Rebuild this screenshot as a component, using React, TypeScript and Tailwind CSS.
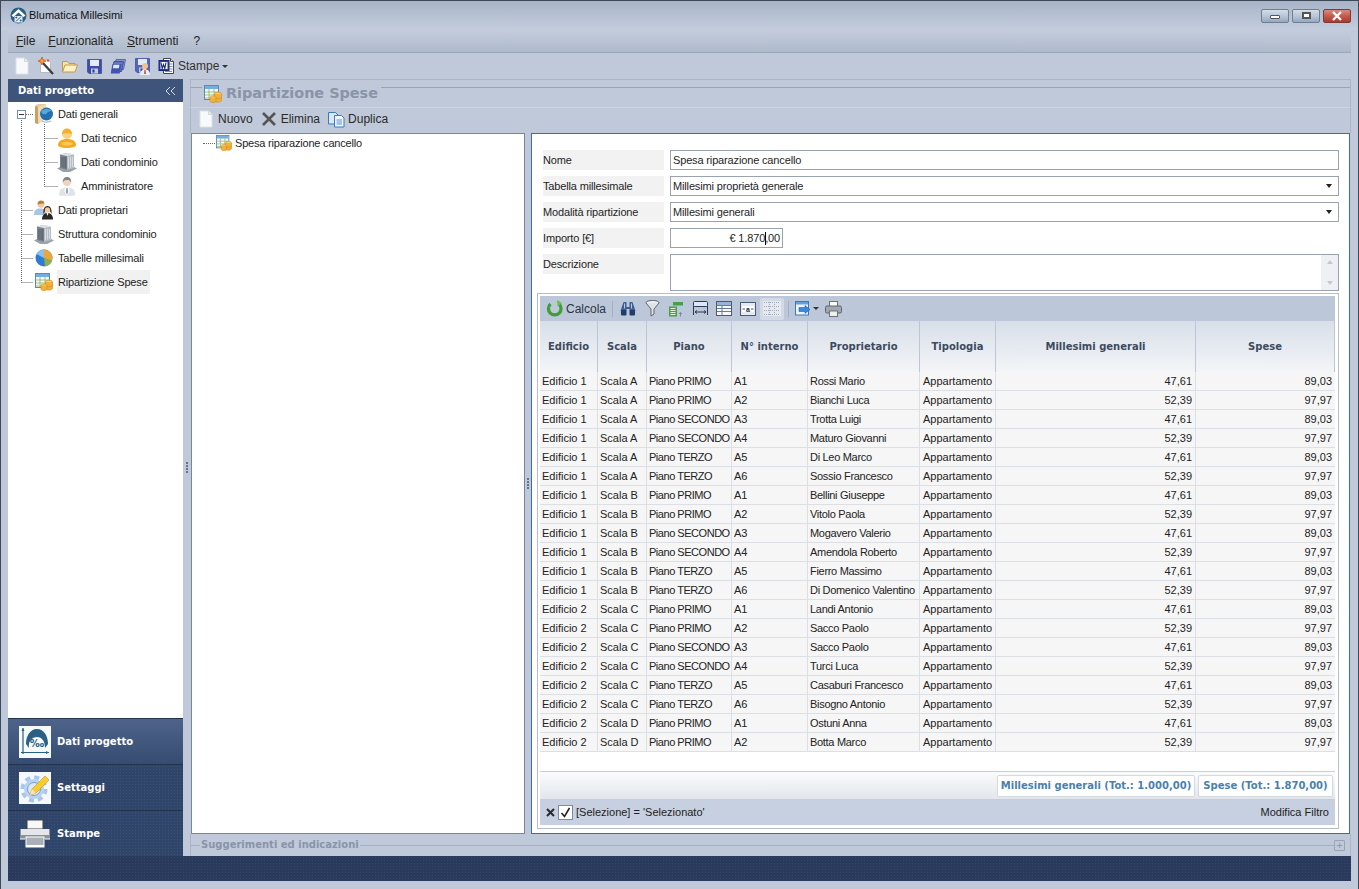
import React from "react"

const FONT = "font-['Liberation_Sans',Arial,sans-serif]"

const rows = [
  ["Edificio 1", "Scala A", "Piano PRIMO", "A1", "Rossi Mario"],
  ["Edificio 1", "Scala A", "Piano PRIMO", "A2", "Bianchi Luca"],
  ["Edificio 1", "Scala A", "Piano SECONDO", "A3", "Trotta Luigi"],
  ["Edificio 1", "Scala A", "Piano SECONDO", "A4", "Maturo Giovanni"],
  ["Edificio 1", "Scala A", "Piano TERZO", "A5", "Di Leo Marco"],
  ["Edificio 1", "Scala A", "Piano TERZO", "A6", "Sossio Francesco"],
  ["Edificio 1", "Scala B", "Piano PRIMO", "A1", "Bellini Giuseppe"],
  ["Edificio 1", "Scala B", "Piano PRIMO", "A2", "Vitolo Paola"],
  ["Edificio 1", "Scala B", "Piano SECONDO", "A3", "Mogavero Valerio"],
  ["Edificio 1", "Scala B", "Piano SECONDO", "A4", "Amendola Roberto"],
  ["Edificio 1", "Scala B", "Piano TERZO", "A5", "Fierro Massimo"],
  ["Edificio 1", "Scala B", "Piano TERZO", "A6", "Di Domenico Valentino"],
  ["Edificio 2", "Scala C", "Piano PRIMO", "A1", "Landi Antonio"],
  ["Edificio 2", "Scala C", "Piano PRIMO", "A2", "Sacco Paolo"],
  ["Edificio 2", "Scala C", "Piano SECONDO", "A3", "Sacco Paolo"],
  ["Edificio 2", "Scala C", "Piano SECONDO", "A4", "Turci Luca"],
  ["Edificio 2", "Scala C", "Piano TERZO", "A5", "Casaburi Francesco"],
  ["Edificio 2", "Scala C", "Piano TERZO", "A6", "Bisogno Antonio"],
  ["Edificio 2", "Scala D", "Piano PRIMO", "A1", "Ostuni Anna"],
  ["Edificio 2", "Scala D", "Piano PRIMO", "A2", "Botta Marco"],
]

const GRID = "grid grid-cols-[58px_49px_85px_76px_112px_76px_200px_139px]"

const IconFile = () => (
  <svg width="14" height="18" viewBox="0 0 14 18">
    <path d="M1 1h8.500L13 4.500V17H1z" fill="#f7f9fb" stroke="#dde1e7" />
    <path d="M9.500 1v3.500H13" fill="#e8ecf1" stroke="#d2d7de" />
  </svg>
)
const IconWand = () => (
  <svg width="18" height="18" viewBox="0 0 18 18">
    <path d="M3.500 2.500h7l3 3v10h-10z" fill="#fff" stroke="#b4bac4" />
    <path d="M6 6l10 11" stroke="#3c3c3c" strokeWidth="2.200" />
    <path d="M5 0l1.200 2.800L9 4 6.200 5.200 5 8 3.800 5.200 1 4l2.800-1.200z" fill="#f2a818" stroke="#d8402f" strokeWidth=".7" />
    <circle cx="11" cy="3.500" r="1.200" fill="#e8503a" />
  </svg>
)
const IconFolder = () => (
  <svg width="16" height="13" viewBox="0 0 16 13">
    <path d="M.5 12V1.500h5l1.500 2h6V5" fill="#f7e3a6" stroke="#c09a4a" />
    <path d="M.5 12L3 5h12.500l-2.500 7z" fill="#fdf0c4" stroke="#c09a4a" />
  </svg>
)
const IconSave = ({ color = "#3d4da8" }: { color?: string }) => (
  <svg width="15" height="15" viewBox="0 0 15 15">
    <path d="M.5.500h14v14H2L.5 13z" fill={color} stroke="#2b3a8c" strokeWidth=".6" />
    <rect x="3" y="1" width="9" height="6" fill="#e4ebf8" />
    <rect x="4" y="9.500" width="7" height="5" fill="#c4cbe0" />
    <rect x="5.500" y="10.500" width="2" height="3" fill="#2b3a8c" />
  </svg>
)
const IconSaveAll = () => (
  <svg width="16" height="15" viewBox="0 0 16 15">
    <path d="M6 .5h9.500l-2 10H4z" fill="#8e9ad0" stroke="#5866ae" />
    <path d="M4 2.500h9.500l-2 10H2z" fill="#6877c0" stroke="#3f4fa0" />
    <path d="M2.500 5h9L9.700 14.500H.7z" fill="#4454ae" />
    <path d="M3.500 5.800h6l-.7 3.500h-6z" fill="#dfe6f6" />
  </svg>
)
const IconSaveAs = () => (
  <div className="relative h-[17px] w-[15px]">
    <IconSave color="#5565bb" />
    <svg className="absolute left-[4px] top-[4px]" width="12" height="13" viewBox="0 0 12 13">
      <circle cx="6" cy="4" r="3" fill="#f0c090" />
      <path d="M1 13c0-4 2-5.500 5-5.500s5 1.500 5 5.500z" fill="#e8eef8" />
      <path d="M5.300 8h1.400l.3 4h-2z" fill="#e05a30" />
    </svg>
  </div>
)
const IconWord = () => (
  <svg width="17" height="18" viewBox="0 0 17 18">
    <path d="M5.500 1.500h7l3 3v12h-10z" fill="#fff" stroke="#444" />
    <path d="M12.500 1.500v3h3" fill="#ddd" stroke="#444" />
    <path d="M11 7h3.500M11 9.500h3.500M11 12h3.500M7 14.500h7" stroke="#7a8aa8" />
    <rect x="1" y="3.500" width="10" height="10" fill="#2a3f9e" stroke="#1a2878" />
    <rect x="2.500" y="5" width="7" height="7" fill="#fff" />
    <path d="M3 5.500l1.200 6 1.300-4 1.300 4 1.200-6" fill="none" stroke="#1a2878" strokeWidth="1.100" />
  </svg>
)
const IconSpesa = ({ size = 18 }: { size?: number }) => (
  <svg width={size} height={size} viewBox="0 0 18 18">
    <rect x=".5" y=".5" width="14" height="14" fill="#f6f8fb" stroke="#5d88b8" />
    <rect x="1" y="1" width="13" height="3" fill="#76aedd" />
    <path d="M1 7h13M1 10h13M1 13h13M5 4v10M10 4v10" stroke="#8fb55f" strokeWidth=".8" />
    <ellipse cx="14" cy="9" rx="3.500" ry="1.800" fill="#fbd264" stroke="#d0921e" strokeWidth=".7" />
    <path d="M10.500 9v6.300c0 1 1.500 1.800 3.500 1.800s3.500-.8 3.500-1.800V9" fill="#f4b03a" stroke="#d0921e" strokeWidth=".7" />
    <path d="M10.500 12c0 1 1.500 1.800 3.500 1.800s3.500-.8 3.500-1.800" fill="none" stroke="#d0921e" strokeWidth=".7" />
    <ellipse cx="9" cy="12.500" rx="3" ry="1.500" fill="#fbd264" stroke="#d0921e" strokeWidth=".7" />
    <path d="M6 12.500v3.500c0 .9 1.300 1.500 3 1.500s3-.6 3-1.500v-3.500" fill="#f4b03a" stroke="#d0921e" strokeWidth=".7" />
  </svg>
)
const IconDuplica = () => (
  <svg width="17" height="17" viewBox="0 0 17 17">
    <path d="M.5 1.500h7l2.500 2.500v9H.5z" fill="#d8e8f8" stroke="#3f78b8" />
    <path d="M6.500 4.500h7l2.500 2.500v9H6.500z" fill="#eef6fd" stroke="#3f78b8" />
    <path d="M8.500 9h5.500M8.500 11h5.500M8.500 13h5.500" stroke="#5f94cc" />
  </svg>
)
const IconFolderGlobe = () => (
  <svg width="20" height="22" viewBox="0 0 20 22">
    <path d="M1 3l3-2h8v14l-8 6-3-1z" fill="#e6c898" />
    <path d="M4 21l-3-1V3l3 1z" fill="#c8a066" />
    <path d="M4 4l8-3v14l-8 6z" fill="#efd9b2" />
    <circle cx="12.500" cy="11" r="6.500" fill="#2270b0" />
    <path d="M7.500 8c3-2.500 6-2.500 9.500-1-1 2.500-3 1-4 3s-3.500 1.500-5.500 0z" fill="#58a8d8" />
    <path d="M8 17.500c3 1.500 6 1 9 0l.5 1c-3 1.500-7 1.500-10 0z" fill="#a8bccc" />
  </svg>
)
const IconHelmet = () => (
  <svg width="20" height="20" viewBox="0 0 20 20">
    <path d="M1 17c0-4 4-6 9-6s9 2 9 6c0 2-4 3-9 3s-9-1-9-3z" fill="#f5a818" />
    <path d="M4 16c2-3 10-3 12 0-3 2-9 2-12 0z" fill="#fbc85a" />
    <circle cx="10" cy="6" r="5" fill="#f8d27c" />
    <path d="M5 6c0-3 2-5.500 5-5.500s5 2.500 5 5.500c-3-1-7-1-10 0z" fill="#f2b02c" />
  </svg>
)
const IconBuilding = () => (
  <svg width="20" height="20" viewBox="0 0 20 20">
    <path d="M0 16.500l5-2.500h10l5 2.500-7 3.500H6z" fill="#9aa2aa" />
    <path d="M3 2.500L10 1v17l-7-2z" fill="#7b858e" />
    <path d="M10 1l7 1.500V16l-7 2z" fill="#b4bcc4" />
    <path d="M3 2.500L10 1l7 1.500-7 1.500z" fill="#dfe3e7" />
    <path d="M5 5v10.500M7 5v11M8.800 5v11.500" stroke="#48525a" strokeWidth=".7" />
    <path d="M11.500 5v11M13.500 5v10.500M15.500 5v10" stroke="#e6eaee" strokeWidth=".7" />
  </svg>
)
const IconAdmin = () => (
  <svg width="18" height="20" viewBox="0 0 18 20">
    <path d="M1 19.500c0-6 2.500-8 8-8s8 2 8 8c-3 .5-13 .5-16 0z" fill="#dfe3e8" />
    <path d="M7 11.500h4l.5 4-2.500 4-2.500-4z" fill="#fff" />
    <path d="M8.300 12h1.400l.5 4-1.200 2.500L7.800 16z" fill="#9aa2ac" />
    <circle cx="9" cy="6" r="4" fill="#f2d2b8" />
    <path d="M4.800 6.500C4.500 3 6.500 1 9 1s4.500 2 4.200 5.500C12 4.500 11 4 9 4s-3 .5-4.200 2.500z" fill="#80868e" />
  </svg>
)
const IconOwners = () => (
  <svg width="20" height="20" viewBox="0 0 20 20">
    <circle cx="7" cy="4.500" r="3.300" fill="#f2c698" />
    <path d="M3.500 4.500C3.500 1.500 5 .5 7 .5s3.500 1 3.500 3c-2 0-5 0-7 1z" fill="#b08038" />
    <path d="M0 15c0-5 2-6.500 6.500-6.500S12 11 12 15z" fill="#a8c4e8" />
    <path d="M9.500 14c-.5-5 1-8 4-8s4.500 3 4 8l-1.500-3h-5z" fill="#33261a" />
    <circle cx="13.500" cy="10" r="2.700" fill="#f2ca9e" />
    <path d="M8 19.500c0-4 2-6.500 5.500-6.500s5.500 2.500 5.500 6.500z" fill="#2c2824" />
    <path d="M12.500 13h2l-1 3z" fill="#fff" />
  </svg>
)
const IconPie = () => (
  <svg width="18" height="18" viewBox="0 0 18 18">
    <circle cx="9" cy="9" r="8.500" fill="#2f7bd4" />
    <path d="M9 9V.5a8.500 8.500 0 0 1 7.800 11.500z" fill="#eea632" />
    <path d="M9 9l7.800 3A8.500 8.500 0 0 1 10 17.400z" fill="#8cb04c" />
    <path d="M9 .5a8.500 8.500 0 0 0-7.500 4.500L9 9z" fill="#8cc0ec" />
  </svg>
)
const IconBinoculars = () => (
  <svg width="16" height="15" viewBox="0 0 16 15">
    <path d="M3.500 1h3v5h3V1h3l3 9H9.500V8h-3v2H.5z" fill="#3f5f92" />
    <rect x="1" y="9" width="5.500" height="5.500" rx="1" fill="#243c68" />
    <rect x="9.500" y="9" width="5.500" height="5.500" rx="1" fill="#243c68" />
    <path d="M4.500 2.500v5M11.500 2.500v5" stroke="#b4c8e8" />
  </svg>
)
const IconFilter = () => (
  <svg width="15" height="17" viewBox="0 0 15 17">
    <ellipse cx="7.500" cy="2.500" rx="6.500" ry="2" fill="#eef0f3" stroke="#5e666e" />
    <path d="M1 3l5 6v7l3-2V9l5-6" fill="#dfe3e8" stroke="#5e666e" />
  </svg>
)
const IconColumns = () => (
  <svg width="16" height="16" viewBox="0 0 16 16">
    <rect x="5" y="1" width="10" height="3.500" fill="#46a046" />
    <path d="M10.500 5h2v2h-2zM13 5h2v2h-2zM10.500 7.500h2v2h-2zM13 7.500h2v2h-2z" fill="#a8d0e0" />
    <rect x="1" y="5.500" width="8" height="10" fill="#4aa04a" />
    <path d="M2.500 7.500h5M2.500 9.500h5M2.500 11.500h5M2.500 13.500h5" stroke="#e4f4d8" />
    <path d="M12.500 15.500v-4m-1.500 1.500l1.500-1.500 1.500 1.500" stroke="#7a8a9a" fill="none" />
  </svg>
)
const IconWidth = () => (
  <svg width="17" height="15" viewBox="0 0 17 15">
    <rect x="1.500" y=".5" width="14" height="5" rx="1" fill="#dce8f6" stroke="#2a3a56" />
    <path d="M1.500 5v9M15.500 5v9" stroke="#2a3a56" />
    <path d="M3 11h11M3 11l2-1.500M3 11l2 1.500M14 11l-2-1.500M14 11l-2 1.500" stroke="#2a3a56" fill="none" />
  </svg>
)
const IconGridHead = () => (
  <svg width="16" height="15" viewBox="0 0 16 15">
    <rect x=".5" y=".5" width="15" height="14" fill="#f6f8fb" stroke="#4a5a76" />
    <rect x="1" y="1" width="14" height="3.500" fill="#9ab4d8" />
    <path d="M1 4.500h14M1 7.500h14M1 10.500h14M6 4.500v10" stroke="#6a7a96" />
  </svg>
)
const IconGridText = () => (
  <svg width="16" height="14" viewBox="0 0 16 14">
    <rect x=".5" y=".5" width="15" height="13" fill="#e4ebf4" stroke="#4a5a76" />
    <rect x="2" y="4" width="12" height="6" fill="#fff" />
    <text x="8" y="9.500" textAnchor="middle" fontSize="7" fontWeight="700" fill="#1e2a3c">a</text>
    <path d="M2.500 7H5M11 7h2.500" stroke="#4a5a76" />
  </svg>
)
const IconGridLines = () => (
  <svg width="18" height="15" viewBox="0 0 18 15">
    <rect width="18" height="15" fill="#e6eaf0" />
    <path d="M1 1.500h16M1 5.500h16M1 9.500h16M1 13.500h16M6.500 1v13M11.500 1v13" stroke="#a2abb8" strokeDasharray="1 1" />
  </svg>
)
const IconExport = () => (
  <svg width="17" height="15" viewBox="0 0 17 15">
    <rect x=".5" y=".5" width="13" height="13.500" fill="#f0f5fb" stroke="#3a78c0" />
    <rect x="1" y="1" width="12" height="2.500" fill="#62a0e0" />
    <path d="M4 6.500h6V4.500l5 4-5 4v-2H4z" fill="#3a88dc" stroke="#2a5ea8" strokeWidth=".6" />
  </svg>
)
const IconPrint = () => (
  <svg width="17" height="16" viewBox="0 0 17 16">
    <rect x="4.500" y=".5" width="8" height="5" fill="#fff" stroke="#6c727a" />
    <rect x=".5" y="5" width="16" height="7" rx="1.500" fill="#a2a8b0" stroke="#5e646c" />
    <rect x="4.500" y="10" width="8" height="5.500" fill="#f0f0f0" stroke="#6c727a" />
  </svg>
)
const IconRefresh = () => (
  <svg width="17" height="17" viewBox="0 0 17 17">
    <path d="M4.500 4a6.300 6.300 0 1 0 8.500 0" fill="none" stroke="#3f9e34" strokeWidth="3.200" />
    <path d="M11 0l.5 6.500 4.500-3.500z" fill="#68c04c" />
  </svg>
)

const LogoSmall = () => (
  <svg width="17" height="17" viewBox="0 0 17 17">
    <circle cx="8.500" cy="8.500" r="8" fill="#2a6084" />
    <path d="M8.500 2L1.500 8.500l2 1.500 5-4.500 5 4.500 2-1.500z" fill="#fff" />
    <rect x="4.500" y="9" width="8" height="6.500" fill="#e8eef4" />
    <path d="M6 14.500l5-5" stroke="#2a6084" />
    <circle cx="6.300" cy="10.500" r="1" fill="#2a6084" />
    <circle cx="10.700" cy="13.500" r="1" fill="#2a6084" />
  </svg>
)

function TitleButton({ children, tone = "blue" }: { children: React.ReactNode; tone?: "blue" | "red" }) {
  return (
    <div
      className={`flex h-[14px] w-[28px] items-center justify-center rounded-[2px] border ${
        tone === "red"
          ? "border-[#7a3a38] bg-[linear-gradient(#d88a80,#c65a4e_50%,#a83a30)]"
          : "border-[#6f7e92] bg-[linear-gradient(#d5dde8,#b8c6d8_50%,#94a8c0)]"
      }`}
    >
      {children}
    </div>
  )
}

function TreeRow({ icon, label, indent = 0, selected = false }: { icon: React.ReactNode; label: string; indent?: number; selected?: boolean }) {
  return (
    <div className="flex h-[24px] items-center" style={{ paddingLeft: indent }}>
      <div className="flex w-[23px] shrink-0 items-center justify-center">{icon}</div>
      <span className={`ml-[2px] flex h-[24px] items-center pl-[1px] pr-[2px] tracking-[-0.15px] ${selected ? "bg-[#f1f1f1]" : ""}`}>{label}</span>
    </div>
  )
}

function NavButton({ icon, label, active = false }: { icon: React.ReactNode; label: string; active?: boolean }) {
  return (
    <div
      className={`flex h-[46px] items-center gap-[6px] border-t border-[#24334f] pl-[11px] font-['DejaVu_Sans',sans-serif] text-[10px] font-bold text-white ${
        active
          ? "bg-[linear-gradient(#4d6389,#364c71)]"
          : "bg-[#30456a] bg-[radial-gradient(#ffffff10_1px,transparent_1px)] bg-[length:3px_3px]"
      }`}
    >
      <div className="h-[32px] w-[32px] shrink-0">{icon}</div>
      {label}
    </div>
  )
}

function FormRow({ label, children, tall = false }: { label: string; children: React.ReactNode; tall?: boolean }) {
  return (
    <div className="flex gap-[6px] tracking-[-0.15px]">
      <div className="flex h-[20px] w-[121px] shrink-0 items-center bg-[#f2f2f2]">{label}</div>
      <div className={`${tall ? "h-[37px]" : "h-[20px]"} flex-1`}>{children}</div>
    </div>
  )
}

function Combo({ value }: { value: string }) {
  return (
    <div className="flex h-full items-center justify-between border border-[#9aa3ad] bg-white pl-[2px] pr-[6px]">
      {value}
      <span className="h-0 w-0 border-x-[3.5px] border-t-[4px] border-x-transparent border-t-[#222]" />
    </div>
  )
}

export default function App() {
  const mainBtn = "flex w-[24px] shrink-0 items-center justify-center"
  const toolBtn = "flex h-[22px] w-[24px] items-center justify-center"
  return (
    <div className={`flex h-[889px] w-[1359px] flex-col overflow-hidden border border-b-0 border-[#3d4859] bg-[#bfc9da] px-[7px] text-[11px] leading-none text-[#1e1e1e] ${FONT}`}>
      {/* Title bar */}
      <div className="-mx-[7px] flex h-[29px] items-center justify-between bg-[linear-gradient(#a9b4c8,#c3cddd)] pl-[9px] pr-[7px]">
        <div className="flex items-center gap-[2px]">
          <LogoSmall />
          <span className="text-[#111]">Blumatica Millesimi</span>
        </div>
        <div className="flex items-center gap-[3px]">
          <TitleButton>
            <span className="mt-[3px] h-[4px] w-[10px] rounded-[1px] border border-[#555] bg-white" />
          </TitleButton>
          <TitleButton>
            <span className="h-[7px] w-[9px] border-2 border-[#555] bg-white" />
          </TitleButton>
          <TitleButton tone="red">
            <svg width="12" height="10" viewBox="0 0 12 10">
              <path d="M2 1l8 8M10 1l-8 8" stroke="#fff" strokeWidth="2.400" />
            </svg>
          </TitleButton>
        </div>
      </div>

      {/* Menu */}
      <div className="flex h-[23px] items-center gap-[14px] border-b border-[#9ca8ba] bg-[linear-gradient(#c3cddd,#aeb9cb)] pl-[8px] text-[12px] text-[#222]">
        <span><u>F</u>ile</span>
        <span className="-ml-[1px]"><u>F</u>unzionalità</span>
        <span><u>S</u>trumenti</span>
        <span className="ml-[1px]">?</span>
      </div>

      {/* Toolbar */}
      <div className="flex h-[26px] items-center pl-[2px] text-[12px] text-[#333]">
        <div className={mainBtn}><IconFile /></div>
        <div className={mainBtn}><IconWand /></div>
        <div className={mainBtn}><IconFolder /></div>
        <div className={mainBtn}><IconSave /></div>
        <div className={mainBtn}><IconSaveAll /></div>
        <div className={mainBtn}><IconSaveAs /></div>
        <div className={mainBtn}><IconWord /></div>
        <span className="flex items-center gap-[3px]">
          Stampe
          <span className="h-0 w-0 border-x-[3px] border-t-[3px] border-x-transparent border-t-[#333]" />
        </span>
      </div>

      <div className="flex min-h-0 flex-1">
        {/* Left panel */}
        <div className="flex w-[175px] shrink-0 flex-col">
          <div className="flex h-[23px] items-center justify-between bg-[#3f547b] pl-[10px] pr-[7px] pt-[1px] font-['DejaVu_Sans',sans-serif] text-[10px] font-bold text-white">
            Dati progetto
            <svg width="11" height="10" viewBox="0 0 11 10" fill="none" stroke="#d5dcea">
              <path d="M5 1L1 5l4 4M10 1L6 5l4 4" />
            </svg>
          </div>
          <div className="relative flex-1 bg-white pl-[14px] text-[#222]">
            {/* connector lines of the tree */}
            <svg className="absolute left-0 top-0" width="60" height="200" fill="none" stroke="#666" strokeDasharray="1 1">
              <path d="M13.500 16v164.500M13.500 180.500h12M13.500 156.500h12M13.500 132.500h12M13.500 108.500h12M18 12.500h8" />
              <path d="M36.500 22v62.500M36.500 84.500h14M36.500 60.500h14M36.500 36.500h14" />
            </svg>
            <div className="absolute left-[9px] top-[8px] flex h-[9px] w-[9px] items-center justify-center border border-[#7d8da5] bg-white">
              <span className="h-[1px] w-[5px] bg-[#333]" />
            </div>
            <div className="relative pl-[10px]">
              <TreeRow icon={<IconFolderGlobe />} label="Dati generali" />
              <TreeRow icon={<IconHelmet />} label="Dati tecnico" indent={23} />
              <TreeRow icon={<IconBuilding />} label="Dati condominio" indent={23} />
              <TreeRow icon={<IconAdmin />} label="Amministratore" indent={23} />
              <TreeRow icon={<IconOwners />} label="Dati proprietari" />
              <TreeRow icon={<IconBuilding />} label="Struttura condominio" />
              <TreeRow icon={<IconPie />} label="Tabelle millesimali" />
              <TreeRow icon={<IconSpesa />} label="Ripartizione Spese" selected />
            </div>
          </div>
          <NavButton
            active
            label="Dati progetto"
            icon={
              <svg width="32" height="32" viewBox="0 0 32 32">
                <rect width="32" height="32" fill="#f7fafb" />
                <path d="M4 2v26M2 26.500h28" stroke="#2a6084" strokeWidth="1.200" />
                <path d="M4 2l-1.500 3h3zM30 26.500l-3-1.500v3z" fill="#2a6084" />
                <path d="M7 18C7 10 11 3 18 3s11 7 11 15l-3 4c0-7-3-11-8-11s-9 4-8 11z" fill="#2a6084" />
                <text x="18" y="21" textAnchor="middle" fontSize="10" fontWeight="700" fill="#2a6084">‰</text>
              </svg>
            }
          />
          <NavButton
            label="Settaggi"
            icon={
              <svg width="32" height="32" viewBox="0 0 32 32">
                <rect width="32" height="32" fill="#f4f8fc" />
                <circle cx="15" cy="17" r="11.500" fill="none" stroke="#a8c6ec" strokeWidth="4" strokeDasharray="5 4" />
                <circle cx="15" cy="17" r="10" fill="#b8d2f2" />
                <circle cx="15" cy="17" r="6.500" fill="#dbe8f8" stroke="#7f9fc8" />
                <path d="M11 23l2-6L26 4l4 4-13 13z" fill="#f8cc2c" stroke="#c9960f" strokeWidth=".6" />
                <path d="M11 23l2-6 4 4z" fill="#f5e3c0" />
              </svg>
            }
          />
          <NavButton
            label="Stampe"
            icon={
              <svg width="32" height="32" viewBox="0 0 32 32">
                <path d="M8 11V2h16v9z" fill="#f8f8f8" stroke="#444" />
                <path d="M1.500 11h29v10h-29z" fill="#e4e6ea" />
                <path d="M1.500 17h29v4h-29z" fill="#8c9198" />
                <path d="M1 21h5M26 21h5" stroke="#fff" />
                <rect x="7" y="19" width="18" height="10" fill="#aab0b8" stroke="#fff" />
                <rect x="7" y="27" width="18" height="2" fill="#fff" />
              </svg>
            }
          />
        </div>

        {/* Splitter */}
        <div className="flex w-[7px] shrink-0 flex-col items-center justify-center gap-[1px]">
          {[0, 1, 2, 3].map((i) => (
            <span key={i} className="h-[2px] w-[2px] bg-[#65748c]" />
          ))}
        </div>

        {/* Content */}
        <div className="flex min-w-0 flex-1 flex-col">
          <div className="flex h-[29px] items-start border border-[#aab5c6] border-b-[#ccd4e0]">
            <span className="mt-[7px] w-[11px] border-t border-[#98a4b6]" />
            <div className="flex h-full items-center pl-[2px] pr-[3px]">
              <IconSpesa />
              <span className="ml-[4px] font-['DejaVu_Sans',sans-serif] text-[14.4px] font-bold text-[#8a94a8]">Ripartizione Spese</span>
            </div>
            <span className="mt-[7px] flex-1 border-t border-[#98a4b6]" />
          </div>
          <div className="flex h-[25px] items-center border-x border-[#aab5c6] pb-[3px] pl-[8px] text-[12px] text-[#2a2a2a]">
            <IconFile />
            <span className="ml-[5px]">Nuovo</span>
            <svg className="ml-[8px]" width="16" height="16" viewBox="0 0 16 16">
              <path d="M2 2l12 12M14 2L2 14" stroke="#555" strokeWidth="2.600" />
            </svg>
            <span className="ml-[4px]">Elimina</span>
            <span className="ml-[8px] flex"><IconDuplica /></span>
            <span className="ml-[3px]">Duplica</span>
          </div>

          <div className="ml-[1px] mr-[1px] flex min-h-0 flex-1">
            {/* Spese tree */}
            <div className="w-[334px] shrink-0 border border-[#78859a] bg-white pl-[11px]">
              <div className="flex h-[18px] items-center">
                <span className="mr-[1px] w-[12px] border-t border-dotted border-[#666]" />
                <IconSpesa size={16} />
                <span className="ml-[3px] tracking-[-0.2px]">Spesa riparazione cancello</span>
              </div>
            </div>

            <div className="flex w-[6px] shrink-0 flex-col items-center justify-center gap-[1px]">
              {[0, 1, 2, 3].map((i) => (
                <span key={i} className="h-[2px] w-[2px] bg-[#65748c]" />
              ))}
            </div>

            {/* Form + grid */}
            <div className="flex min-w-0 flex-1 flex-col border border-[#3a6ea5] bg-white">
              <div className="flex flex-col gap-[6px] pl-[11px] pr-[10px] pt-[16px]">
                <FormRow label="Nome">
                  <div className="flex h-full items-center border border-[#9aa3ad] pl-[2px]">Spesa riparazione cancello</div>
                </FormRow>
                <FormRow label="Tabella millesimale">
                  <Combo value="Millesimi proprietà generale" />
                </FormRow>
                <FormRow label="Modalità ripartizione">
                  <Combo value="Millesimi generali" />
                </FormRow>
                <FormRow label="Importo [€]">
                  <div className="flex h-full w-[113px] items-center justify-end border border-[#9aa3ad] pr-[2px]">
                    € 1.870<span className="-mr-[1px] h-[13px] w-[1px] bg-black" />,00
                  </div>
                </FormRow>
                <FormRow label="Descrizione" tall>
                  <div className="flex h-full justify-end border border-[#9aa3ad]">
                    <div className="flex w-[17px] flex-col justify-between bg-[#eef0f3] py-[5px]">
                      <span className="mx-auto h-0 w-0 border-x-[3px] border-b-[4px] border-x-transparent border-b-[#c4c8ce]" />
                      <span className="mx-auto h-0 w-0 border-x-[3px] border-t-[4px] border-x-transparent border-t-[#c4c8ce]" />
                    </div>
                  </div>
                </FormRow>
              </div>

              {/* Grid */}
              <div className="mb-[4px] ml-[5px] mr-[10px] mt-[2px] flex min-h-0 flex-1 flex-col border border-[#b8bec6] pb-[3px] pl-[2px] pr-[3px] pt-[2px]">
                <div className="flex h-[25px] shrink-0 items-center bg-[#bcc8da] pl-[6px] text-[12px] text-[#2a3442]">
                  <IconRefresh />
                  <span className="ml-[3px]">Calcola</span>
                  <span className="ml-[6px] mr-[3px] h-[16px] w-[1px] bg-[#a3afc1]" />
                  <div className={toolBtn}><IconBinoculars /></div>
                  <div className={toolBtn}><IconFilter /></div>
                  <div className={toolBtn}><IconColumns /></div>
                  <div className={toolBtn}><IconWidth /></div>
                  <div className={toolBtn}><IconGridHead /></div>
                  <div className={toolBtn}><IconGridText /></div>
                  <div className={`${toolBtn} rounded-[2px] bg-[#d3dae5]`}><IconGridLines /></div>
                  <span className="ml-[4px] mr-[6px] h-[16px] w-[1px] bg-[#a3afc1]" />
                  <IconExport />
                  <span className="ml-[1px] h-0 w-0 border-x-[3px] border-t-[3px] border-x-transparent border-t-[#333]" />
                  <span className="ml-[6px] flex"><IconPrint /></span>
                </div>

                <div className={`${GRID} h-[51px] shrink-0 bg-[linear-gradient(#d8dfe9,#f3f5f8)] font-['DejaVu_Sans',sans-serif] text-[10px] font-bold text-[#3d4a5f]`}>
                  {["Edificio", "Scala", "Piano", "N° interno", "Proprietario", "Tipologia", "Millesimi generali", "Spese"].map((h) => (
                    <div key={h} className="flex items-center justify-center border-r border-[#bcc6d4]">
                      {h}
                    </div>
                  ))}
                </div>

                <div className="flex-1">
                  {rows.map((r, i) => {
                    const even = i % 2 === 0
                    return (
                      <div key={i} className={`${GRID} h-[19px] border-b border-[#dcdfe4] bg-[#f6f6f6] text-[#222]`}>
                        <div className="flex items-center whitespace-nowrap border-r border-[#dcdfe4] pl-[2px]">{r[0]}</div>
                        <div className="flex items-center whitespace-nowrap border-r border-[#dcdfe4] pl-[2px]">{r[1]}</div>
                        <div className="flex items-center whitespace-nowrap border-r border-[#dcdfe4] pl-[2px] tracking-[-0.47px]">{r[2]}</div>
                        <div className="flex items-center whitespace-nowrap border-r border-[#dcdfe4] pl-[2px]">{r[3]}</div>
                        <div className="flex items-center whitespace-nowrap border-r border-[#dcdfe4] pl-[2px] tracking-[-0.3px]">{r[4]}</div>
                        <div className="flex items-center whitespace-nowrap border-r border-[#dcdfe4] pl-[3px]">Appartamento</div>
                        <div className="flex items-center justify-end border-r border-[#dcdfe4] pr-[3px]">{even ? "47,61" : "52,39"}</div>
                        <div className="flex items-center justify-end pr-[3px]">{even ? "89,03" : "97,97"}</div>
                      </div>
                    )
                  })}
                </div>

                <div className="flex h-[29px] shrink-0 items-center justify-end gap-[3px] border-y border-[#c8ced8] bg-[linear-gradient(#fafbfc,#e2e6ec)] pr-[2px] font-['DejaVu_Sans',sans-serif] text-[10px] font-bold text-[#4a7fb0]">
                  <div className="flex h-[22px] w-[198px] items-center justify-center whitespace-nowrap rounded-[2px] border border-[#d4d9e0] bg-white">Millesimi generali (Tot.: 1.000,00)</div>
                  <div className="flex h-[22px] w-[135px] items-center justify-center whitespace-nowrap rounded-[2px] border border-[#d4d9e0] bg-white">Spese (Tot.: 1.870,00)</div>
                </div>
                <div className="flex h-[25px] shrink-0 items-center justify-between bg-[#c6d0e0] pl-[6px] pr-[6px] text-[#222]">
                  <div className="flex items-center">
                    <svg width="9" height="9" viewBox="0 0 9 9">
                      <path d="M1 1l7 7M8 1L1 8" stroke="#2a2a2a" strokeWidth="2" />
                    </svg>
                    <span className="ml-[3px] flex h-[15px] w-[15px] items-center justify-center border border-[#808a98] bg-white">
                      <svg width="11" height="11" viewBox="0 0 11 11">
                        <path d="M1.500 6l3 3.500 5-8.500" fill="none" stroke="#222" strokeWidth="1.600" />
                      </svg>
                    </span>
                    <span className="ml-[3px]">[Selezione] = 'Selezionato'</span>
                  </div>
                  <span>Modifica Filtro</span>
                </div>
              </div>
            </div>
          </div>

          {/* Suggerimenti */}
          <div className="flex h-[22px] shrink-0 items-center border-x border-[#aab5c6] pr-[5px] font-['DejaVu_Sans',sans-serif] text-[10px] font-bold text-[#8a94a8]">
            <span className="w-[9px] border-t border-[#a3aebf]" />
            <span className="px-[1px]">Suggerimenti ed indicazioni</span>
            <span className="flex-1 border-t border-[#a3aebf]" />
            <span className="flex h-[11px] w-[11px] items-center justify-center rounded-[1px] border border-[#98a4b6] text-[9px] font-normal">+</span>
          </div>
        </div>
      </div>

      {/* Status bar */}
      <div className="h-[25px] shrink-0 bg-[#2a3a5c] bg-[radial-gradient(#ffffff0d_1px,transparent_1px)] bg-[length:3px_3px]" />
      <div className="h-[8px] shrink-0" />
    </div>
  )
}
